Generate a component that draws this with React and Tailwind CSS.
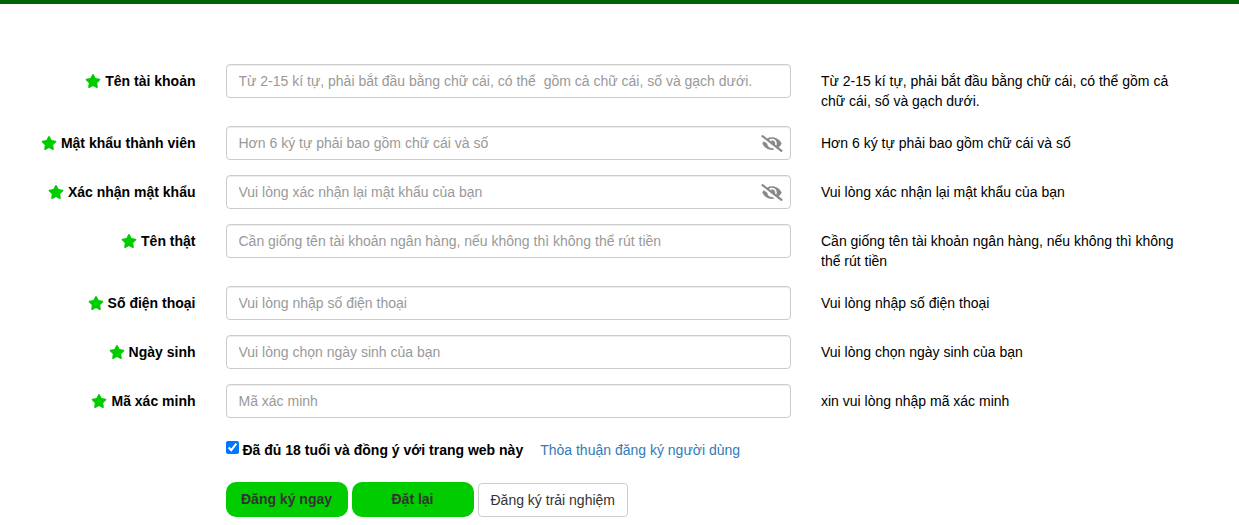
import { FaStar, FaEyeSlash } from "react-icons/fa";

const FIELDS = [
  {
    id: "account",
    label: "Tên tài khoản",
    placeholder: "Từ 2-15 kí tự, phải bắt đầu bằng chữ cái, có thể\u00a0 gồm cả chữ cái, số và gạch dưới.",
    hint: "Từ 2-15 kí tự, phải bắt đầu bằng chữ cái, có thể gồm cả chữ cái, số và gạch dưới.",
  },
  { id: "password", type: "password", label: "Mật khẩu thành viên", placeholder: "Hơn 6 ký tự phải bao gồm chữ cái và số" },
  { id: "confirm", type: "password", label: "Xác nhận mật khẩu", placeholder: "Vui lòng xác nhận lại mật khẩu của bạn" },
  { id: "name", label: "Tên thật", placeholder: "Cần giống tên tài khoản ngân hàng, nếu không thì không thể rút tiền" },
  { id: "phone", label: "Số điện thoại", placeholder: "Vui lòng nhập số điện thoại" },
  { id: "birthday", label: "Ngày sinh", placeholder: "Vui lòng chọn ngày sinh của bạn" },
  { id: "captcha", label: "Mã xác minh", placeholder: "Mã xác minh", hint: "xin vui lòng nhập mã xác minh" },
];

function Field({ id, label, type = "text", placeholder, hint = placeholder }) {
  return (
    <div className="mb-[15px] grid grid-cols-12">
      <label htmlFor={id} className="col-span-2 flex h-[34px] items-center justify-end gap-1 pr-[15px] font-bold whitespace-nowrap">
        <FaStar className="h-[14px] w-4 text-[#00cc00]" aria-hidden="true" />
        {label}
      </label>
      <div className="relative col-span-6 px-[15px]">
        <input
          id={id}
          type={type}
          placeholder={placeholder}
          className="h-[34px] w-full rounded border border-[#ccc] bg-white px-3 text-[#555] shadow-[inset_0_1px_1px_rgba(0,0,0,0.075)] placeholder:text-[#999]"
        />
        {type === "password" && (
          <button type="button" aria-label="Hiện mật khẩu" className="absolute top-[9px] right-[23px] text-[#888]">
            <FaEyeSlash className="h-[17px] w-[22px]" />
          </button>
        )}
      </div>
      <p className="col-span-4 px-[15px] pt-[7px]">{hint}</p>
    </div>
  );
}

export default function App() {
  return (
    <main className="border-t-4 border-[#006400] bg-white pr-9 pl-3 font-['Liberation_Sans',Arial,sans-serif] text-sm leading-5 text-black">
      <form className="pt-[60px]" onSubmit={(e) => e.preventDefault()}>
        {FIELDS.map((field) => (
          <Field key={field.id} {...field} />
        ))}
        <div className="grid grid-cols-12 pt-[6px]">
          <div className="col-span-10 col-start-3 flex items-center pl-[15px]">
            <input id="agree" type="checkbox" defaultChecked className="mr-1 mb-1 size-[13px]" />
            <label htmlFor="agree" className="font-bold">
              Đã đủ 18 tuổi và đồng ý với trang web này
            </label>
            <a href="#terms" className="pt-px pl-[17px] text-[#337ab7]">
              Thỏa thuận đăng ký người dùng
            </a>
          </div>
        </div>
        <div className="grid grid-cols-12 pt-[22px]">
          <div className="col-span-10 col-start-3 flex items-end gap-1 pl-[15px]">
            <button type="submit" className="h-[35px] w-[122px] rounded-[10px] bg-[#00cc00] pb-0.5 font-bold text-[#333]">
              Đăng ký ngay
            </button>
            <button type="reset" className="h-[35px] w-[122px] rounded-[10px] bg-[#00cc00] pb-0.5 font-bold text-[#333]">
              Đặt lại
            </button>
            <button type="button" className="h-[34px] rounded border border-[#ccc] bg-white px-3 text-[#333]">
              Đăng ký trải nghiệm
            </button>
          </div>
        </div>
      </form>
    </main>
  );
}
